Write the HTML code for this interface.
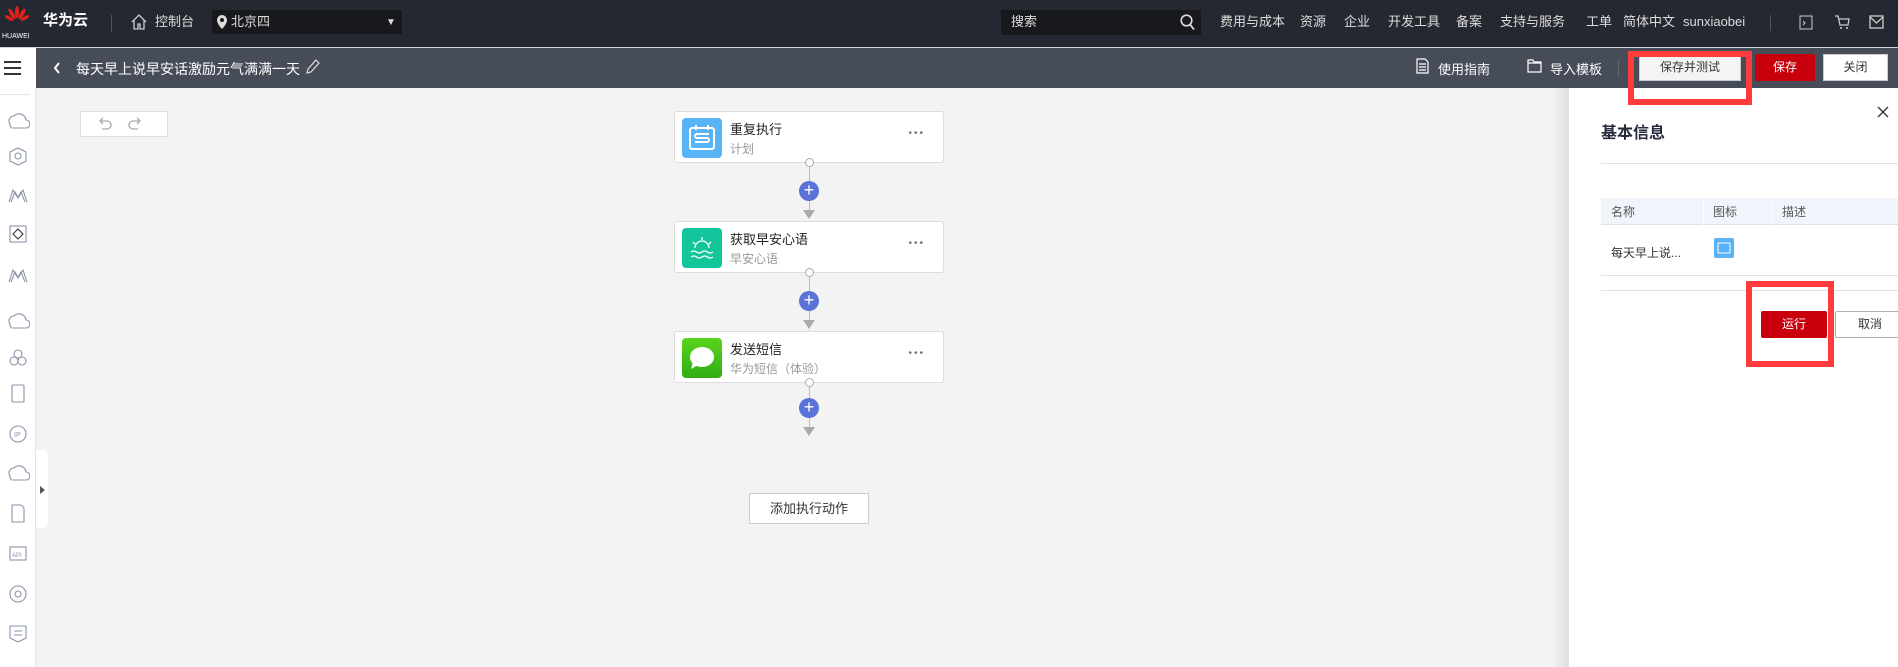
<!DOCTYPE html>
<html><head><meta charset="utf-8"><style>
*{margin:0;padding:0;box-sizing:border-box}
body{width:1898px;height:667px;overflow:hidden;background:#f3f3f3;font-family:"Liberation Sans","Noto Sans CJK SC",sans-serif;position:relative}
.a{position:absolute}
.top{left:0;top:0;width:1898px;height:47px;background:#252830;color:#dcdcdc;font-size:13px}
.top span{position:absolute;top:13px;line-height:18px;height:18px;white-space:nowrap}
.bar2{left:0;top:48px;width:1898px;height:40px;background:#474c59;color:#fff}
.side{left:0;top:88px;width:36px;height:579px;background:#fff;border-right:1px solid #e5e5e5}
.card{position:absolute;left:674px;width:270px;height:52px;background:#fff;border:1px solid #dcdcdc;border-radius:3px}
.card .ic{position:absolute;left:7px;top:6px;width:40px;height:40px;border-radius:4px}
.card .t{position:absolute;left:55px;top:7px;font-size:13px;color:#222}
.card .s{position:absolute;left:55px;top:28px;font-size:12px;color:#999}
.card .d{position:absolute;right:18px;top:16px;font-size:10px;color:#777;letter-spacing:2px}
.dot{position:absolute;width:9px;height:9px;border:1px solid #aaa;border-radius:50%;background:#fff}
.ln{position:absolute;width:1px;background:#bbb}
.plus{position:absolute;width:20px;height:20px;border-radius:50%;background:#5b73d8;color:#fff;font-size:18px;line-height:19px;text-align:center}
.arr{position:absolute;width:0;height:0;border-left:6px solid transparent;border-right:6px solid transparent;border-top:9px solid #aaa}
.btn{position:absolute;font-size:12px;text-align:center}
</style></head><body>
<div class="a top">
 <svg class="a" style="left:5px;top:6px" width="24" height="20" viewBox="0 0 24 20"><g fill="#e2231a"><ellipse cx="12" cy="6" rx="2" ry="6"/><ellipse cx="7" cy="8" rx="2" ry="6" transform="rotate(-30 7 8)"/><ellipse cx="17" cy="8" rx="2" ry="6" transform="rotate(30 17 8)"/><ellipse cx="4" cy="12" rx="1.6" ry="5" transform="rotate(-60 4 12)"/><ellipse cx="20" cy="12" rx="1.6" ry="5" transform="rotate(60 20 12)"/></g></svg>
 <span style="left:2px;top:28px;font-size:7px;color:#fff">HUAWEI</span>
 <span style="left:43px;top:12px;font-size:15px;font-weight:bold;color:#fff">华为云</span>
 <div class="a" style="left:111px;top:15px;width:1px;height:17px;background:#555"></div>
 <svg class="a" style="left:130px;top:13px" width="18" height="18" viewBox="0 0 18 18"><path d="M2 9L9 2l7 7M4 7v9h4v-5h2v5h4V7" fill="none" stroke="#ccc" stroke-width="1.3"/></svg>
 <span style="left:155px">控制台</span>
 <div class="a" style="left:212px;top:10px;width:190px;height:24px;background:#18191c"></div>
 <svg class="a" style="left:217px;top:15px" width="10" height="14" viewBox="0 0 10 14"><path d="M5 0a5 5 0 0 0-5 5c0 4 5 9 5 9s5-5 5-9a5 5 0 0 0-5-5z" fill="#ddd"/><circle cx="5" cy="5" r="2" fill="#18191c"/></svg>
 <span style="left:231px">北京四</span>
 <span style="left:386px;top:14px;font-size:10px">▼</span>
 <div class="a" style="left:1001px;top:10px;width:200px;height:25px;background:#18191c"></div>
 <span style="left:1011px">搜索</span>
 <svg class="a" style="left:1180px;top:14px" width="15" height="17" viewBox="0 0 15 17"><circle cx="6.5" cy="6.5" r="5.3" fill="none" stroke="#ddd" stroke-width="1.6"/><path d="M10 10.5l4 5" stroke="#ddd" stroke-width="1.8"/></svg>
 <span style="left:1220px">费用与成本</span><span style="left:1300px">资源</span><span style="left:1344px">企业</span><span style="left:1388px">开发工具</span><span style="left:1456px">备案</span><span style="left:1500px">支持与服务</span><span style="left:1586px">工单</span><span style="left:1623px">简体中文</span><span style="left:1683px">sunxiaobei</span>
 <div class="a" style="left:1770px;top:15px;width:1px;height:16px;background:#555"></div>
 <svg class="a" style="left:1799px;top:15px" width="14" height="15"><rect x="1" y="1" width="12" height="13" fill="none" stroke="#ccc"/><path d="M4 6l2 2-2 2" stroke="#ccc" fill="none"/></svg>
 <svg class="a" style="left:1834px;top:14px" width="16" height="16"><path d="M1 2h3l2 9h8l1-6H5" fill="none" stroke="#ccc" stroke-width="1.3"/><circle cx="7" cy="14" r="1" fill="#ccc"/><circle cx="13" cy="14" r="1" fill="#ccc"/></svg>
 <svg class="a" style="left:1869px;top:15px" width="15" height="14"><rect x="1" y="1" width="13" height="12" fill="none" stroke="#ccc" stroke-width="1.3"/><path d="M1 2l6.5 6L14 2" fill="none" stroke="#ccc" stroke-width="1.3"/></svg>
</div>
<div class="a" style="left:0;top:47px;width:1898px;height:1px;background:#cfd3dc"></div>
<div class="a bar2">
 <div class="a" style="left:0;top:0;width:36px;height:40px;background:#fff"></div>
 <div class="a" style="left:4px;top:13px;width:17px;height:2px;background:#333;box-shadow:0 6px 0 #333,0 12px 0 #333"></div>
 <svg class="a" style="left:53px;top:14px" width="8" height="12"><path d="M6 1L2 6l4 5" fill="none" stroke="#fff" stroke-width="2"/></svg>
 <span class="a" style="left:76px;top:11px;font-size:14px">每天早上说早安话激励元气满满一天</span>
 <svg class="a" style="left:306px;top:11px" width="14" height="16"><path d="M10 1l3 3-8 9-4 1 1-4z" fill="none" stroke="#ddd" stroke-width="1.2"/></svg>
 <svg class="a" style="left:1416px;top:10px" width="13" height="16"><path d="M1 1h8l3 3v11H1z M3 6h7M3 9h7M3 12h7" fill="none" stroke="#fff" stroke-width="1.2"/></svg>
 <span class="a" style="left:1438px;top:11px;font-size:13px">使用指南</span>
 <svg class="a" style="left:1527px;top:11px" width="15" height="14"><path d="M1 1h5l1 2h7v10H1z M1 4h13" fill="none" stroke="#fff" stroke-width="1.2"/></svg>
 <span class="a" style="left:1550px;top:11px;font-size:13px">导入模板</span>
 <div class="a" style="left:1618px;top:12px;width:1px;height:17px;background:#666"></div>
</div>
<div class="btn" style="left:1639px;top:54px;width:102px;height:27px;background:#f4f4f4;border:1px solid #ccc;line-height:25px;color:#333">保存并测试</div>
<div class="btn" style="left:1755px;top:54px;width:60px;height:27px;background:#c7000b;line-height:27px;color:#fff;border-radius:2px">保存</div>
<div class="btn" style="left:1823px;top:54px;width:65px;height:27px;background:#fff;border:1px solid #ccc;line-height:25px;color:#333">关闭</div>
<div class="a side">
 <div class="a" style="left:0;top:6px;width:30px;height:1px;background:#e5e5e5"></div>
 <svg class="a" style="left:6px;top:14px" width="24" height="560" viewBox="0 0 24 560" fill="none" stroke="#8a94a8" stroke-width="1.1">
  <path d="M4 22a5 5 0 0 1 4-8 7 7 0 0 1 12 4 4 4 0 0 1 0 8H6a4 4 0 0 1-2-4z"/>
  <path d="M12 46l8 4v9l-8 4-8-4v-9z"/><circle cx="12" cy="54" r="3"/>
  <path d="M3 100l4-12 5 8 5-8 4 12M5 100l4-10 3 5 3-5 4 10"/>
  <rect x="4" y="124" width="16" height="16"/><path d="M12 127l5 5-5 5-5-5z" stroke="#333"/>
  <path d="M3 180l4-12 5 8 5-8 4 12M5 180l4-10 3 5 3-5 4 10"/>
  <path d="M4 222a5 5 0 0 1 4-8 7 7 0 0 1 12 4 4 4 0 0 1 0 8H6a4 4 0 0 1-2-4z"/>
  <circle cx="12" cy="252" r="4"/><circle cx="8" cy="259" r="4"/><circle cx="16" cy="259" r="4"/>
  <rect x="6" y="283" width="12" height="17" rx="1"/>
  <circle cx="12" cy="332" r="8"/><text x="8" y="335" font-size="7" fill="#8a94a8" stroke="none">IP</text>
  <path d="M4 374a5 5 0 0 1 4-8 7 7 0 0 1 12 4 4 4 0 0 1 0 8H6a4 4 0 0 1-2-4z"/>
  <path d="M6 403h9l3 3v14H6z"/>
  <rect x="4" y="445" width="16" height="13"/><text x="6" y="455" font-size="6" fill="#8a94a8" stroke="none">API</text>
  <circle cx="12" cy="492" r="8"/><circle cx="12" cy="492" r="3"/>
  <path d="M4 524h16v12l-8 4-8-4z M8 529h8M8 533h8"/>
 </svg>
</div>
<div class="a" style="left:36px;top:450px;width:12px;height:78px;background:#fff;border-radius:0 6px 6px 0"></div>
<div class="a" style="left:40px;top:486px;width:0;height:0;border-top:4px solid transparent;border-bottom:4px solid transparent;border-left:5px solid #555"></div>
<div class="a" style="left:80px;top:111px;width:88px;height:26px;background:#fff;border:1px solid #e0e0e0"></div>
<svg class="a" style="left:96px;top:116px" width="60" height="16" fill="none" stroke="#aaa" stroke-width="1.3"><path d="M4 5h7a4 4 0 0 1 0 8H6M7 2L4 5l3 3"/><path d="M44 5h-7a4 4 0 0 0 0 8h5M41 2l3 3-3 3"/></svg>

<div class="card" style="top:111px"><div class="ic" style="background:#58b3f7"><svg width="40" height="40"><rect x="8" y="10" width="24" height="21" rx="2" fill="none" stroke="#fff" stroke-width="2"/><path d="M14 7v5M26 7v5M27 16H15a2 2 0 0 0 0 4h10a2 2 0 0 1 0 4H13" fill="none" stroke="#fff" stroke-width="2"/></svg></div><div class="t">重复执行</div><div class="s">计划</div><div class="d">•••</div></div>
<div class="card" style="top:221px"><div class="ic" style="background:#13c59b"><svg width="40" height="40" fill="none" stroke="#fff" stroke-width="1.3"><path d="M13 20a7 7 0 0 1 14 0M20 9v3M11 14l2 2M29 14l-2 2M9 24q3-2 5.5 0t5.5 0 5.5 0 5.5 0M9 29q3-2 5.5 0t5.5 0 5.5 0 5.5 0"/></svg></div><div class="t">获取早安心语</div><div class="s">早安心语</div><div class="d">•••</div></div>
<div class="card" style="top:331px"><div class="ic" style="background:linear-gradient(#5ad41c,#2fae14)"><svg width="40" height="40"><ellipse cx="20" cy="19" rx="12" ry="10" fill="#fff"/><path d="M11 24l-2 7 7-4z" fill="#fff"/></svg></div><div class="t">发送短信</div><div class="s">华为短信（体验）</div><div class="d">•••</div></div>

<div class="ln" style="left:809px;top:166px;height:52px"></div><div class="dot" style="left:805px;top:158px"></div><div class="plus" style="left:799px;top:181px">+</div><div class="arr" style="left:803px;top:210px"></div>
<div class="ln" style="left:809px;top:276px;height:52px"></div><div class="dot" style="left:805px;top:268px"></div><div class="plus" style="left:799px;top:291px">+</div><div class="arr" style="left:803px;top:320px"></div>
<div class="ln" style="left:809px;top:386px;height:48px"></div><div class="dot" style="left:805px;top:378px"></div><div class="plus" style="left:799px;top:398px">+</div><div class="arr" style="left:803px;top:427px"></div>

<div class="btn" style="left:749px;top:493px;width:120px;height:31px;background:#fff;border:1px solid #ccc;line-height:29px;font-size:13px;color:#333">添加执行动作</div>

<div class="a" style="left:1552px;top:88px;width:17px;height:579px;background:linear-gradient(90deg,rgba(0,0,0,0),rgba(0,0,0,.08))"></div>
<div class="a" style="left:1569px;top:88px;width:329px;height:579px;background:#fff"></div>
<svg class="a" style="left:1877px;top:106px" width="12" height="12"><path d="M1 1l10 10M11 1L1 11" stroke="#333" stroke-width="1.3"/></svg>
<div class="a" style="left:1601px;top:119px;font-size:16px;font-weight:bold;color:#252b3a">基本信息</div>
<div class="a" style="left:1601px;top:163px;width:297px;height:1px;background:#dfe1e6"></div>
<div class="a" style="left:1601px;top:198px;width:297px;height:27px;background:#f1f4fb;border-bottom:1px solid #dfe1e6"></div>
<div class="a" style="left:1703px;top:198px;width:1px;height:27px;background:#fff"></div>
<div class="a" style="left:1771px;top:198px;width:1px;height:27px;background:#fff"></div>
<div class="a" style="left:1611px;top:203px;font-size:12px;color:#555">名称</div>
<div class="a" style="left:1713px;top:203px;font-size:12px;color:#555">图标</div>
<div class="a" style="left:1782px;top:203px;font-size:12px;color:#555">描述</div>
<div class="a" style="left:1611px;top:244px;font-size:12px;color:#333">每天早上说...</div>
<div class="a" style="left:1714px;top:238px;width:20px;height:20px;background:#58b3f7;border-radius:2px"><svg width="20" height="20"><rect x="4" y="5" width="12" height="10" fill="none" stroke="#fff" stroke-width="1"/></svg></div>
<div class="a" style="left:1601px;top:275px;width:297px;height:1px;background:#dfe1e6"></div>
<div class="a" style="left:1601px;top:290px;width:297px;height:1px;background:#dfe1e6"></div>
<div class="btn" style="left:1761px;top:311px;width:66px;height:27px;background:#c7000b;color:#fff;line-height:27px;border-radius:2px">运行</div>
<div class="btn" style="left:1835px;top:311px;width:70px;height:27px;background:#fff;border:1px solid #adb0b8;color:#333;line-height:25px;border-radius:2px">取消</div>

<div class="a" style="left:1628px;top:51px;width:124px;height:54px;border:6px solid #ff3b3b"></div>
<div class="a" style="left:1746px;top:281px;width:88px;height:86px;border:6px solid #ff3b3b"></div>
</body></html>
